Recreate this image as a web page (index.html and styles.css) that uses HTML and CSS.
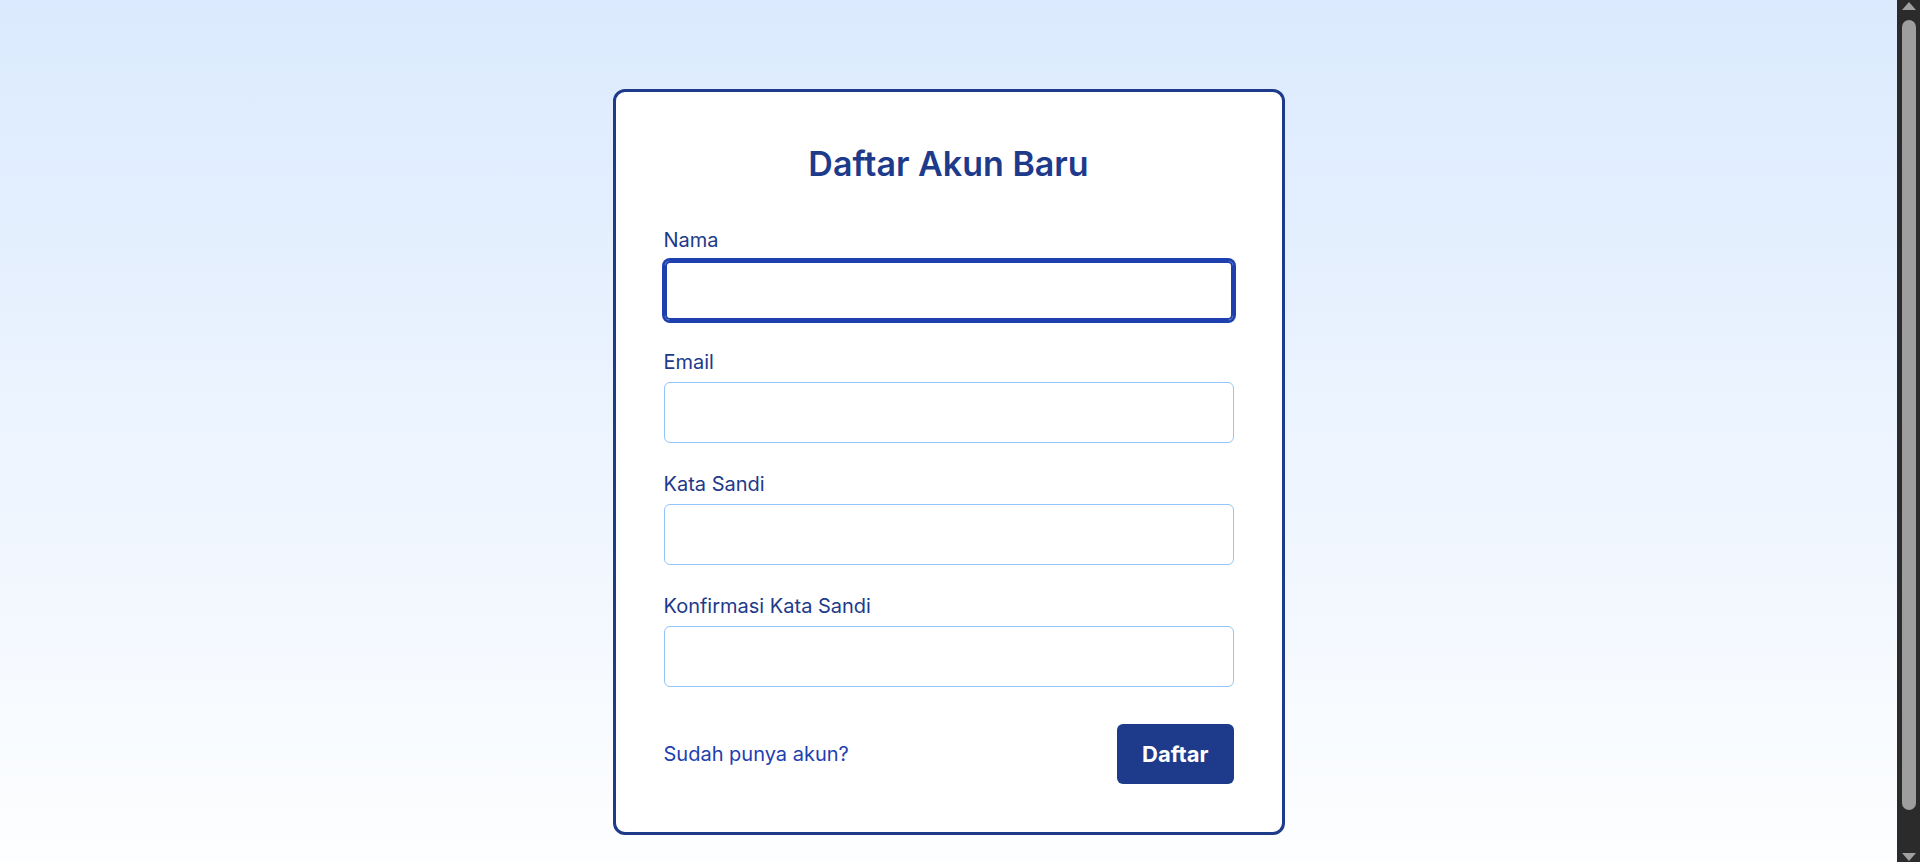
FILE: index.html
```html
<!DOCTYPE html>
<html lang="id">
<head>
<meta charset="utf-8">
<title>Daftar Akun Baru</title>
<link rel="stylesheet" href="styles.css">
</head>
<body>
<main class="page">
  <form class="card">
    <h1 class="title">Daftar Akun Baru</h1>
    <div class="field">
      <label class="label" for="nama">Nama</label>
      <input class="input input-focus" id="nama" type="text">
    </div>
    <div class="field">
      <label class="label" for="email">Email</label>
      <input class="input" id="email" type="email">
    </div>
    <div class="field">
      <label class="label" for="pass">Kata Sandi</label>
      <input class="input" id="pass" type="password">
    </div>
    <div class="field">
      <label class="label" for="pass2">Konfirmasi Kata Sandi</label>
      <input class="input" id="pass2" type="password">
    </div>
    <div class="actions">
      <a class="link" href="#">Sudah punya akun?</a>
      <button class="btn" type="button">Daftar</button>
    </div>
  </form>
</main>
<div class="scrollbar" aria-hidden="true">
  <span class="sb-up"></span>
  <span class="sb-thumb"></span>
  <span class="sb-down"></span>
</div>
</body>
</html>
```
FILE: styles.css
```css
html {
  background: #ffffff;
}
body {
  margin: 0;
  font-family: Inter, "Noto Sans", sans-serif;
  color: #1e3a8a;
  background: linear-gradient(to bottom, #dbeafe 0%, #ffffff 100%);
}
.page {
  display: flex;
  justify-content: center;
  padding: 89px 0 69px;
  margin-right: 23px;
}
.card {
  box-sizing: border-box;
  width: 672px;
  background: #ffffff;
  border: 3px solid #1e3a8a;
  border-radius: 12px;
  padding: 48px;
  display: flex;
  flex-direction: column;
}
.title {
  margin: 0 0 38px;
  font-size: 34px;
  line-height: 48px;
  font-weight: 600;
  text-align: center;
  color: #1e3a8a;
}
.field {
  display: flex;
  flex-direction: column;
  margin-bottom: 27px;
}
.label {
  font-size: 20px;
  line-height: 28px;
  margin-bottom: 6px;
  color: #1e3a8a;
}
.input {
  box-sizing: border-box;
  height: 61px;
  width: 100%;
  background: #ffffff;
  border: 1px solid #93c5fd;
  border-radius: 6px;
  outline: none;
  padding: 0 14px;
  font: inherit;
  color: #1e3a8a;
}
.input-focus {
  border-color: #1e40af;
  box-shadow: 0 0 0 2px #1e40af, inset 0 0 0 2px #1e40af;
}
.actions {
  margin-top: 10px;
  display: flex;
  justify-content: space-between;
  align-items: center;
}
.link {
  font-size: 20px;
  line-height: 28px;
  color: #1e40af;
  text-decoration: none;
}
.btn {
  height: 60px;
  padding: 0 25px;
  border: none;
  border-radius: 6px;
  background: #1e3a8a;
  color: #ffffff;
  font-family: Inter, "Noto Sans", sans-serif;
  font-size: 22px;
  font-weight: 700;
  cursor: pointer;
}

/* dark browser scrollbar drawn over the right edge */
.scrollbar {
  position: fixed;
  top: 0;
  right: 0;
  width: 23px;
  height: 100vh;
  background: #2b2b2b;
  display: flex;
  flex-direction: column;
  align-items: center;
  box-sizing: border-box;
  padding: 2px 0 1px 1px;
}
.sb-up {
  width: 0;
  height: 0;
  border-left: 7px solid transparent;
  border-right: 7px solid transparent;
  border-bottom: 8px solid #a0a0a0;
}
.sb-thumb {
  margin-top: 10px;
  width: 14px;
  height: 790px;
  border-radius: 7px;
  background: #9e9e9e;
}
.sb-down {
  margin-top: auto;
  width: 0;
  height: 0;
  border-left: 7px solid transparent;
  border-right: 7px solid transparent;
  border-top: 8px solid #a0a0a0;
}
```
